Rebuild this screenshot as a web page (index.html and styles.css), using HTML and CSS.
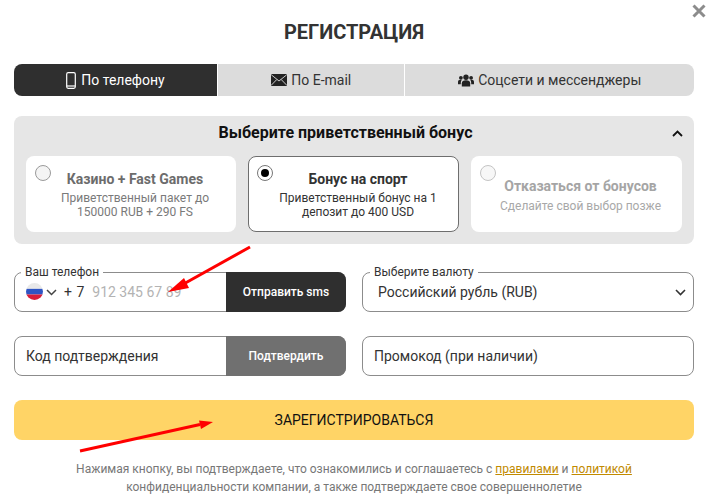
FILE: index.html
```html
<!DOCTYPE html>
<html lang="ru">
<head>
<meta charset="utf-8">
<title>Регистрация</title>
<link rel="stylesheet" href="styles.css">
</head>
<body>
<main class="modal">
  <svg class="close" width="14" height="14" viewBox="0 0 14 14"><path d="M1.5 1.5l11 11M12.5 1.500l-11 11" stroke="#8c8c8c" stroke-width="3" fill="none"/></svg>
  <h1 class="title">РЕГИСТРАЦИЯ</h1>
  <nav class="tabs">
    <div class="tab tab-phone active">
      <svg width="10" height="17" viewBox="0 0 10 17"><rect x="0.700" y="0.700" width="8.600" height="15.600" rx="1.500" fill="none" stroke="#fff" stroke-width="1.200"/><path d="M1 14h8" stroke="#fff" stroke-width="1.200"/></svg>
      <span>По телефону</span>
    </div>
    <div class="tab tab-mail">
      <svg width="16" height="12" viewBox="0 0 16 12"><rect width="16" height="12" rx="1" fill="#222"/><path d="M0.300 0.800L8 7l7.700-6.200M0.300 11.200L5.800 5.500M15.700 11.200L10.200 5.500" stroke="#ddd" stroke-width="0.900" fill="none"/></svg>
      <span>По E-mail</span>
    </div>
    <div class="tab tab-social">
      <svg width="16" height="13" viewBox="0 0 16 13"><g fill="#222"><circle cx="8" cy="3.200" r="2.700"/><path d="M3.800 12.500V9.300C3.800 7.300 5.300 6.300 8 6.300s4.200 1 4.200 3v3.200z"/><circle cx="2.900" cy="3.800" r="1.900"/><circle cx="13.100" cy="3.800" r="1.900"/><path d="M0 10.300V8c0-1.300.9-2.200 2.500-2.200.5 0 .9.100 1.300.300-.7.700-1 1.800-1 3.200v1zM16 10.300V8c0-1.300-.9-2.200-2.500-2.200-.5 0-.9.100-1.300.300.7.700 1 1.800 1 3.200v1z"/></g></svg>
      <span>Соцсети и мессенджеры</span>
    </div>
  </nav>

  <section class="bonus">
    <header class="bonus-head">
      <h2 class="bonus-title">Выберите приветственный бонус</h2>
      <svg class="bonus-toggle" width="11" height="7" viewBox="0 0 11 7"><path d="M1 6l4.500-4.500L10 6" fill="none" stroke="#111" stroke-width="1.800"/></svg>
    </header>
    <div class="bonus-cards">
      <article class="card card-casino">
        <span class="radio"></span>
        <h3 class="card-title">Казино + Fast Games</h3>
        <p class="card-text">Приветственный пакет до<br>150000 RUB + 290 FS</p>
      </article>
      <article class="card card-sport">
        <span class="radio radio-on"></span>
        <h3 class="card-title">Бонус на спорт</h3>
        <p class="card-text">Приветственный бонус на 1<br>депозит до 400 USD</p>
      </article>
      <article class="card card-none">
        <span class="radio"></span>
        <h3 class="card-title">Отказаться от бонусов</h3>
        <p class="card-text">Сделайте свой выбор позже</p>
      </article>
    </div>
  </section>

  <div class="form-grid">
    <div class="field field-btn">
      <span class="float-label label-phone">Ваш телефон</span>
      <div class="field-body">
        <svg class="flag" width="17" height="17" viewBox="0 0 16 16"><defs><clipPath id="flag-clip"><circle cx="8" cy="8" r="8"/></clipPath></defs><g clip-path="url(#flag-clip)"><rect width="16" height="5.500" fill="#e9e9e9"/><rect y="5.500" width="16" height="5.300" fill="#2f55c4"/><rect y="10.800" width="16" height="5.200" fill="#d81e3a"/></g></svg>
        <svg class="chev chev-phone" width="11" height="7" viewBox="0 0 11 7"><path d="M1 1l4.500 4.500L10 1" fill="none" stroke="#444" stroke-width="1.500"/></svg>
        <span class="code">+ 7</span>
        <span class="placeholder">912 345 67 89</span>
      </div>
      <div class="side-btn btn-dark">Отправить sms</div>
    </div>
    <div class="field">
      <span class="float-label label-cur">Выберите валюту</span>
      <div class="field-body body-cur">
        <span class="value">Российский рубль (RUB)</span>
        <svg class="chev" width="11" height="7" viewBox="0 0 11 7"><path d="M1 1l4.500 4.500L10 1" fill="none" stroke="#333" stroke-width="1.600"/></svg>
      </div>
    </div>
    <div class="field field-btn">
      <div class="field-body"><span class="value">Код подтверждения</span></div>
      <div class="side-btn btn-grey">Подтвердить</div>
    </div>
    <div class="field">
      <div class="field-body"><span class="value">Промокод (при наличии)</span></div>
    </div>
  </div>

  <div class="submit">ЗАРЕГИСТРИРОВАТЬСЯ</div>

  <p class="legal">Нажимая кнопку, вы подтверждаете, что ознакомились и соглашаетесь с <a href="#">правилами</a> и <a href="#">политикой</a><br>конфиденциальности компании, а также подтверждаете свое совершеннолетие</p>

  <svg class="arrows" width="711" height="502" viewBox="0 0 711 502">
    <path d="M250 247L180 286" stroke="#f00" stroke-width="3" fill="none"/>
    <path d="M168 292L184 278L189 288z" fill="#f00"/>
    <path d="M80 451L200 424.500" stroke="#f00" stroke-width="3" fill="none"/>
    <path d="M213 422L199 420.500L201 429z" fill="#f00"/>
  </svg>
</main>
</body>
</html>
```

FILE: styles.css
```css
* { box-sizing: border-box; }
html, body { margin: 0; padding: 0; background: #fff; }
body { font-family: Roboto, "Liberation Sans", sans-serif; color: #333; overflow: hidden; }
.modal { position: relative; width: 711px; height: 502px; padding: 0 17px 0 14px; }
.close { position: absolute; left: 692px; top: 4px; }
.title { margin: 0; height: 64px; padding-top: 20px; font-size: 20px; line-height: 24px; font-weight: 700; text-align: center; color: #333; }

.tabs { display: grid; grid-template-columns: 203px 186px 289px; gap: 1px; height: 32px; }
.tab { display: flex; align-items: center; justify-content: center; gap: 5px; background: #dcdcdc; font-size: 14px; color: #333; }
.tab.active { background: #2f2f2f; color: #fff; border-radius: 8px 0 0 8px; }
.tab-social { border-radius: 0 8px 8px 0; }
.tab-mail span, .tab-social span { margin-left: -0.500px; }

.bonus { margin-top: 20px; height: 128px; padding: 0 12px; background: #e6e6e6; border-radius: 8px; }
.bonus-head { position: relative; height: 40px; display: flex; align-items: center; justify-content: center; padding-right: 17px; }
.bonus-title { margin: 0 0 7px; font-size: 16px; line-height: 20px; font-weight: 700; color: #111; }
.bonus-toggle { position: absolute; right: -1px; top: 14px; }
.bonus-cards { display: grid; grid-template-columns: 210px 211px 211px; gap: 12px; height: 76px; }
.card { position: relative; background: #fff; border-radius: 8px; text-align: center; padding: 15px 10px 0 18px; }
.card-title { margin: 0; font-size: 14px; line-height: 17px; font-weight: 700; color: #333; }
.card-text { margin: 3px 0 0; font-size: 12px; line-height: 14px; color: #333; }
.card-casino .card-title { color: #6c6c6c; }
.card-casino .card-text { color: #7a7a7a; }
.card-sport { border: 1px solid #6e6e6e; padding: 14px 10px 0 19px; }
.card-none { padding: 22px 5px 0 13px; }
.card-none .card-title { color: #a5a5a5; }
.card-none .card-text { color: #a8a8a8; margin-top: 4px; }
.radio { position: absolute; left: 9px; top: 9px; width: 16px; height: 16px; border-radius: 50%; border: 1px solid #9a9a9a; background: #f4f4f4; }
.card-sport .radio { left: 8px; top: 8px; background: #fff; border-color: #777; }
.card-none .radio { border-color: #c4c4c4; background: #f7f7f7; }
.radio-on::after { content: ""; position: absolute; left: 3px; top: 3px; width: 8px; height: 8px; border-radius: 50%; background: #000; }

.form-grid { margin-top: 28px; display: grid; grid-template-columns: 332px 332px; column-gap: 16px; row-gap: 24px; }
.field { position: relative; display: flex; height: 40px; border: 1px solid #8c8c8c; border-radius: 8px; background: #fff; }
.field-body { flex: 1; min-width: 0; display: flex; align-items: center; padding-left: 11px; font-size: 14px; color: #333; }
.float-label { position: absolute; top: -8px; padding: 0 4px; background: #fff; font-size: 12px; line-height: 14px; color: #333; }
.label-phone { left: 6px; }
.label-cur { left: 7px; }
.flag { flex: none; margin-bottom: 1px; }
.chev-phone { margin-left: 3px; }
.code { margin-left: 7px; font-size: 14px; color: #333; white-space: pre; word-spacing: 1px; }
.placeholder { margin-left: 8px; font-size: 14px; color: #b3b3b3; }
.body-cur { padding: 0 7px 0 15px; justify-content: space-between; }
.value { font-size: 14px; white-space: nowrap; }
.side-btn { flex: none; width: 120px; margin: -1px -1px -1px 0; display: flex; align-items: center; justify-content: center; border-radius: 0 8px 8px 0; font-size: 12px; color: #fff; font-weight: 500; }
.btn-dark { background: #2f2f2f; }
.btn-grey { background: #707070; }

.submit { margin-top: 24px; height: 40px; display: flex; align-items: center; justify-content: center; background: #ffd466; border-radius: 8px; font-size: 14px; color: #111; }
.legal { margin: 20px 0 0; font-size: 12px; line-height: 18px; text-align: center; color: #777; }
.legal a { color: #c18a00; text-decoration: underline; }
.arrows { position: absolute; left: 0; top: 0; pointer-events: none; }
```
